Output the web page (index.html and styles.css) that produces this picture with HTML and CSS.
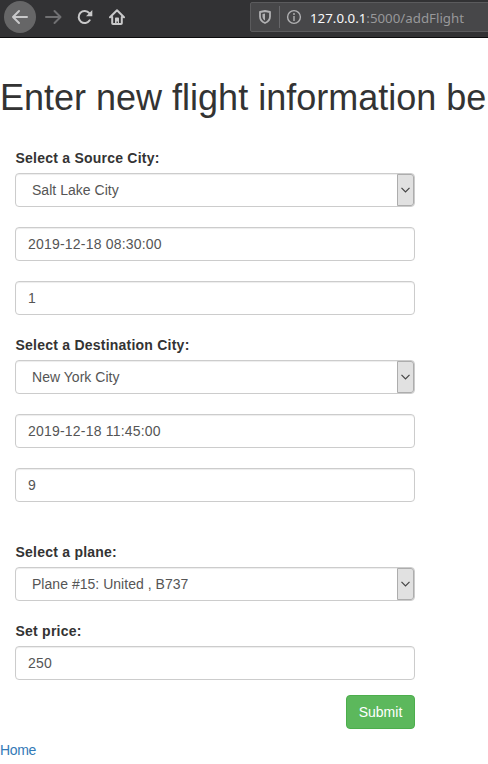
FILE: index.html
```html
<!DOCTYPE html>
<html lang="en">
<head>
<meta charset="utf-8">
<title>Add Flight</title>
<link rel="stylesheet" href="styles.css">
</head>
<body>
<header class="toolbar">
  <nav class="nav">
    <span class="back"><svg width="18" height="16" viewBox="0 0 18 16"><path d="M16 8H2M8 2L2 8l6 6"/></svg></span>
    <svg class="forward" width="18" height="16" viewBox="0 0 18 16"><path d="M1 8h14M9.500 2l6 6-6 6"/></svg>
    <svg class="reload" width="16" height="16" viewBox="0 0 16 16"><path d="M12.700 11.300A6 6 0 1 1 12.300 4.200"/><path class="solid" d="M15.300 1v6.300H9z"/></svg>
    <svg class="house" width="16" height="16" viewBox="0 0 16 16"><path d="M1 8.200L8 1.300l7 6.900M3.200 8v6.200q0 .8.800.8h8q.8 0 .8-.8V8"/><path class="solid" d="M6 14.500V9.300q0-.8.800-.8h2.400q.8 0 .8.800v5.200H8.800v-2H7.600v2z"/></svg>
  </nav>
  <div class="address">
    <svg class="shield" width="14" height="16" viewBox="0 0 14 16"><path d="M7 2L12 3v4.500c0 3-2 5.300-5 6.500-3-1.200-5-3.500-5-6.500V3z"/><path class="solid" d="M7 4.500v7C5.300 10.500 4.500 9 4.500 7.500V5z"/></svg>
    <span class="divider"></span>
    <svg class="info" width="16" height="16" viewBox="0 0 16 16"><circle cx="8" cy="8" r="6.400"/><path d="M8 7v5M8 4v2"/></svg>
    <span class="url"><b>127.0.0.1</b>:5000/addFlight</span>
  </div>
</header>
<main>
  <h1>Enter new flight information be</h1>
  <form class="form">
    <label for="source">Select a Source City:</label>
    <div class="select"><select id="source"><option>Salt Lake City</option></select><span class="arrow"><svg width="9" height="6" viewBox="0 0 9 6"><path d="M.5.800l4 4 4-4"/></svg></span></div>
    <input type="text" value="2019-12-18 08:30:00">
    <input type="text" value="1">
    <label for="destination">Select a Destination City:</label>
    <div class="select"><select id="destination"><option>New York City</option></select><span class="arrow"><svg width="9" height="6" viewBox="0 0 9 6"><path d="M.5.800l4 4 4-4"/></svg></span></div>
    <input type="text" value="2019-12-18 11:45:00">
    <input type="text" value="9">
    <label class="plane-label" for="plane">Select a plane:</label>
    <div class="select"><select id="plane"><option>Plane #15: United , B737</option></select><span class="arrow"><svg width="9" height="6" viewBox="0 0 9 6"><path d="M.5.800l4 4 4-4"/></svg></span></div>
    <label for="price">Set price:</label>
    <input class="price" id="price" type="text" value="250">
    <button type="button">Submit</button>
  </form>
  <a class="home" href="#">Home</a>
</main>
</body>
</html>
```
FILE: styles.css
```css
* { box-sizing: border-box; }
body {
  margin: 0;
  font: 14px/20px "Liberation Sans", Arial, sans-serif;
  color: #333;
  background: #fff;
  overflow: hidden;
}
svg { display: block; flex: none; fill: none; stroke: #c9c9ca; stroke-width: 2; stroke-linecap: round; stroke-linejoin: round; }
.solid { fill: #c9c9ca; stroke: none; }

.toolbar { display: flex; height: 38px; background: #323234; border-bottom: 1px solid #0c0c0d; }
.nav { display: flex; flex: none; align-items: center; width: 250px; height: 34px; padding-left: 4px; }
.back { display: flex; align-items: center; justify-content: center; width: 32px; height: 32px; border-radius: 50%; background: #666667; }
.forward { margin-left: 9px; stroke: #707072; }
.reload { margin-left: 14px; }
.house { margin-left: 16px; }
.address { display: flex; align-items: center; width: 260px; height: 30px; margin-top: 2px; padding-left: 7px; background: #474749; border: 1px solid #5b5b5d; border-radius: 2px; flex: none; }
.shield, .info { stroke: #b1b1b3; stroke-width: 1.8; }
.shield .solid { fill: #b1b1b3; }
.divider { width: 1px; height: 22px; margin: 0 6px 0 7px; background: #67676a; }
.info { stroke-width: 1.4; stroke-linecap: butt; }
.url { margin-left: 8px; padding-top: 1px; font: 13.3px/20px "Noto Sans", sans-serif; color: #98989a; white-space: nowrap; }
.url b { font-weight: 400; color: #f9f9fa; }

h1 { margin: 40px 0 30px; font-size: 36px; line-height: 40px; font-weight: 400; white-space: nowrap; }
.form { display: flex; flex-direction: column; width: 400px; margin-left: 15px; }
label { height: 20px; margin-bottom: 5px; padding-left: .5px; font-weight: 700; letter-spacing: .23px; }
.plane-label { margin-top: 20px; }
input, .select { width: 400px; height: 34px; margin: 0 0 20px; border: 1px solid #ccc; border-radius: 4px; background: #fff; box-shadow: inset 0 1px 1px rgba(0, 0, 0, .075); }
input { padding: 6px 12px; font: inherit; letter-spacing: .2px; color: #555; }
.select { display: flex; }
select { flex: 1; appearance: none; border: 0; padding: 0 16px; font: inherit; letter-spacing: .03px; color: #555; background: transparent; }
.arrow { display: flex; align-items: center; justify-content: center; width: 17px; height: 32px; background: #e1e1e1; border: 1px solid #adadad; border-radius: 0 3px 3px 0; }
.arrow svg { stroke: #444; stroke-width: 1.2; stroke-linecap: butt; stroke-linejoin: miter; }
.price { margin-bottom: 15px; }
button { align-self: flex-end; width: 69px; height: 34px; padding: 0; font: inherit; color: #fff; background: #5cb85c; border: 1px solid #4cae4c; border-radius: 4px; }
.home { display: block; margin-top: 11px; color: #337ab7; letter-spacing: -.35px; text-decoration: none; }
```
